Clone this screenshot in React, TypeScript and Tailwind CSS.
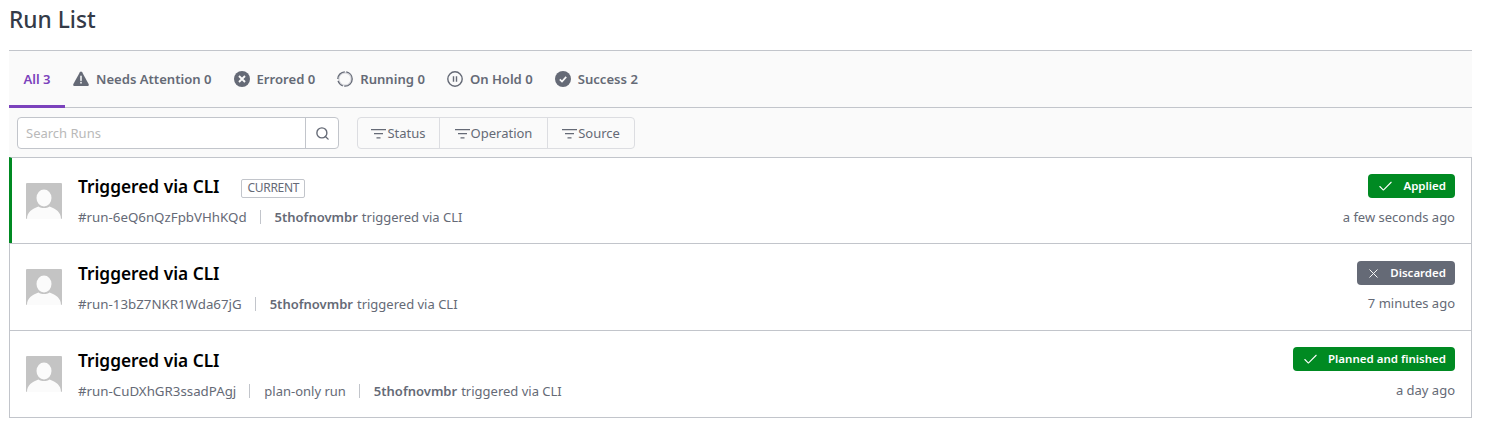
import React from "react";
import { Check, Search, X } from "lucide-react";

const font = "font-['Noto_Sans','Open_Sans',sans-serif]";

const tabs = [
  { label: "Needs Attention 0", icon: "warning" },
  { label: "Errored 0", icon: "errored" },
  { label: "Running 0", icon: "running" },
  { label: "On Hold 0", icon: "hold" },
  { label: "Success 2", icon: "success" },
];

const TabIcon = ({ name }: { name: string }) => {
  if (name === "warning") {
    return (
      <svg width="16" height="16" viewBox="0 0 17 16" fill="#656a76">
        <path d="M8.5 0c-.5 0-.9.3-1.2.8L.4 13.200c-.6 1.200.1 2.300 1.300 2.300h13.600c1.200 0 1.900-1.100 1.300-2.300L9.700.8C9.400.3 9 0 8.500 0z" />
        <rect x="7.700" y="4.500" width="1.600" height="5.500" fill="#fafafa" />
        <rect x="7.700" y="11" width="1.600" height="1.800" fill="#fafafa" />
      </svg>
    );
  }
  if (name === "errored") {
    return (
      <svg width="16" height="16" viewBox="0 0 16 16">
        <circle cx="8" cy="8" r="8" fill="#656a76" />
        <path d="M5 5l6 6M11 5l-6 6" stroke="#fafafa" strokeWidth="1.900" />
      </svg>
    );
  }
  if (name === "running") {
    return (
      <svg width="16" height="16" viewBox="0 0 16 16" fill="none">
        <circle cx="8" cy="8" r="6.200" stroke="#d5d6db" strokeWidth="1.400" />
        <circle cx="8" cy="8" r="7.200" stroke="#656a76" strokeWidth="1.300" strokeDasharray="12 1.500 7 2 11 1.500" />
      </svg>
    );
  }
  if (name === "hold") {
    return (
      <svg width="16" height="16" viewBox="0 0 16 16" fill="none">
        <circle cx="8" cy="8" r="7.200" stroke="#656a76" strokeWidth="1.400" />
        <path d="M6.500 5.300v5.400M9.500 5.300v5.400" stroke="#656a76" strokeWidth="1.400" />
      </svg>
    );
  }
  return (
    <svg width="16" height="16" viewBox="0 0 16 16">
      <circle cx="8" cy="8" r="8" fill="#656a76" />
      <path d="M4.800 8.300l2.200 2.200 4.200-4.600" stroke="#fafafa" strokeWidth="1.700" fill="none" />
    </svg>
  );
};

const FilterIcon = () => (
  <svg width="15" height="10" viewBox="0 0 15 10" stroke="#656a76" strokeWidth="1.200">
    <path d="M0 .6h15M3 4.600h9M5.500 8.800h4" />
  </svg>
);

const Avatar = () => (
  <svg width="36" height="36" viewBox="0 0 36 36" className="shrink-0">
    <rect width="36" height="36" rx="1" fill="#c4c4c4" />
    <ellipse cx="18" cy="15" rx="7.500" ry="8.500" fill="#fbfbfb" />
    <path d="M1 36c0-7 5-10 11.500-12.500 3 2 8 2 11 0C30 26 35 29 35 36z" fill="#fbfbfb" />
  </svg>
);

const Sep = () => <span className="ml-[13px] mr-[14px] h-[14px] w-px bg-[#c2c5cb]" />;

const runs = [
  {
    id: "#run-6eQ6nQzFpbVHhKQd",
    current: true,
    badge: "Applied",
    tone: "bg-[#008a22]",
    time: "a few seconds ago",
    badgeTop: "pt-4",
    timeGap: "mt-[10px]",
  },
  {
    id: "#run-13bZ7NKR1Wda67jG",
    current: false,
    badge: "Discarded",
    tone: "bg-[#656a76]",
    time: "7 minutes ago",
    badgeTop: "pt-[17px]",
    timeGap: "mt-[9px]",
  },
  {
    id: "#run-CuDXhGR3ssadPAgj",
    current: false,
    planOnly: true,
    badge: "Planned and finished",
    tone: "bg-[#008a22]",
    time: "a day ago",
    badgeTop: "pt-4",
    timeGap: "mt-[10px]",
  },
];

export default function App() {
  return (
    <div className={`${font} h-[433px] w-[1491px] overflow-hidden bg-white pl-[9px] pr-[19px] text-[#656a76]`}>
      <h1 className="h-[50px] pt-[3px] text-[22.700px] leading-[34px] font-medium text-[#343b48]">Run List</h1>

      <div className="flex h-[58px] items-stretch border-y border-[#c2c5cb] bg-[#fafafa] text-[13.100px] font-semibold">
        <div className="-mb-px flex w-[56px] items-center justify-center border-b-[3px] border-[#7b42bc] pt-[3px] text-[#7b42bc]">
          All 3
        </div>
        <div className="flex items-center gap-[22px] pl-2 pt-px">
          {tabs.map((tab) => (
            <div key={tab.label} className="flex items-center gap-[7px]">
              <TabIcon name={tab.icon} />
              <span>{tab.label}</span>
            </div>
          ))}
        </div>
      </div>

      <div className="flex h-[49px] items-start gap-[18px] bg-[#fafafa] pl-2 pt-[9px]">
        <div className="flex h-[32px] w-[322px] rounded-sm border border-[#c2c5cb] bg-white">
          <div className="flex flex-1 items-center border-r border-[#c2c5cb] pl-2 pt-px text-[13px] text-[#b9b9b9]">
            Search Runs
          </div>
          <div className="flex w-8 items-center justify-center">
            <Search size={15} strokeWidth={2.200} />
          </div>
        </div>
        <div className="flex h-[32px] rounded-sm border border-[#dcdde1] text-[13px]">
          <div className="flex w-[82px] items-center justify-center gap-px border-r border-[#dcdde1] pt-px">
            <FilterIcon />
            Status
          </div>
          <div className="flex w-[108px] items-center justify-center gap-px border-r border-[#dcdde1] pt-px">
            <FilterIcon />
            Operation
          </div>
          <div className="flex w-[86px] items-center justify-center gap-px pt-px">
            <FilterIcon />
            Source
          </div>
        </div>
      </div>

      <ul className="border border-t-0 border-[#c2c5cb]">
        {runs.map((run) => (
          <li
            key={run.id}
            className={`-mx-px flex justify-between border-t border-[#c2c5cb] pr-[17px] ${
              run.current ? "h-[86px] border-l-[3px] border-l-[#008a22] pl-[14px]" : "h-[87px] border-l border-l-[#c2c5cb] pl-4"
            }`}
          >
            <div className="flex items-start">
              <div className="mt-[25px]">
                <Avatar />
              </div>
              <div className={`ml-4 ${run.current ? "pt-[15px]" : "pt-4"}`}>
                <div className="flex h-[28px] items-center">
                  <span className="text-[17.300px] leading-[28px] font-semibold text-black">Triggered via CLI</span>
                  {run.current && (
                    <span className="ml-[22px] mt-[2px] flex h-[19px] items-center rounded-[2px] border border-[#c2c5cb] px-[5px] text-[12px] tracking-tight">
                      CURRENT
                    </span>
                  )}
                </div>
                <div className={`flex items-center text-[13px] leading-[18px] ${run.current ? "mt-[7px]" : "mt-[7px]"}`}>
                  <span className="text-[13.300px]">{run.id}</span>
                  {run.planOnly && (
                    <>
                      <Sep />
                      <span>plan-only run</span>
                    </>
                  )}
                  <Sep />
                  <span className="font-semibold">5thofnovmbr</span>
                  <span className="ml-1">triggered via CLI</span>
                </div>
              </div>
            </div>
            <div className={`flex flex-col items-end ${run.badgeTop}`}>
              <span className={`flex h-6 items-center gap-[9px] rounded-sm px-[9px] text-[11.500px] font-semibold text-white ${run.tone}`}>
                {run.badge === "Discarded" ? <X size={15} strokeWidth={1.500} /> : <Check size={17} strokeWidth={1.500} />}
                {run.badge}
              </span>
              <span className={`${run.timeGap} text-[13px] leading-[18px]`}>{run.time}</span>
            </div>
          </li>
        ))}
      </ul>
    </div>
  );
}
